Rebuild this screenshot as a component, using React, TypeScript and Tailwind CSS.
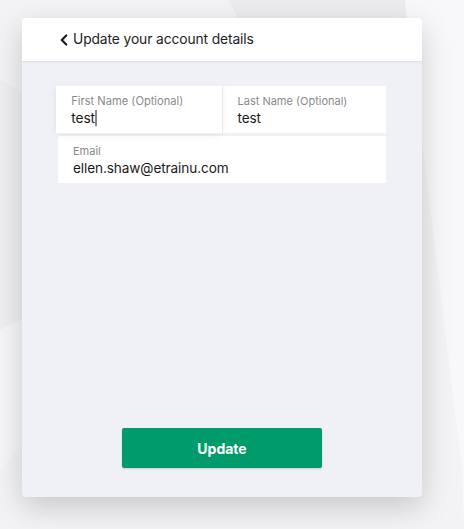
import { ChevronLeft } from "lucide-react";

function Field({
  label,
  value,
  focused,
}: {
  label: string;
  value: string;
  focused?: boolean;
}) {
  return (
    <div
      className={`flex h-[47px] flex-col bg-white px-[15px] pt-[8px] ${
        focused
          ? "relative z-10 origin-right scale-[1.012] shadow-[0_2px_8px_rgba(0,0,0,0.08)]"
          : ""
      }`}
    >
      <span className="text-[11px] leading-[14px] text-[#8a8a8e]">{label}</span>
      <span className="flex items-center text-[13.6px] leading-[20px] tracking-[-0.1px] text-[#1a1a1a]">
        {value}
        {focused && <span className="ml-px h-[16px] w-px bg-[#1a1a1a]" />}
      </span>
    </div>
  );
}

export default function App() {
  return (
    <div className="relative h-[529px] w-[464px] overflow-hidden bg-[#f3f3f5] font-['Inter',sans-serif]">
      <svg
        className="absolute inset-0"
        width="464"
        height="529"
        viewBox="0 0 464 529"
      >
        <polygon points="228,0 405,0 420,160 250,40" fill="#ececee" />
        <polygon points="405,0 464,0 464,529 462,470" fill="#f8f8fa" />
        <polygon points="0,80 60,110 60,300 0,330" fill="#efeff1" />
        <polygon points="0,330 60,300 60,400 0,470" fill="#f6f6f8" />
      </svg>

      <div className="relative px-[22px] pt-[18px]">
        <div className="flex h-[479px] w-[400px] flex-col overflow-hidden rounded-[4px] bg-[#f0f1f6] shadow-[0_10px_30px_rgba(0,0,0,0.18)]">
          <div className="flex h-[44px] items-center border-b border-[#e2e3e8] bg-white pl-[33px] shadow-[0_1px_2px_rgba(0,0,0,0.04)]">
            <ChevronLeft size={18} strokeWidth={3} className="text-[#1f1f1f]" />
            <span className="ml-[0px] text-[13.8px] tracking-[-0.1px] text-[#222]">
              Update your account details
            </span>
          </div>

          <div className="flex flex-1 flex-col px-[36px] pt-[24px] pb-[29px]">
            <div className="grid grid-cols-2 gap-x-px gap-y-[3px]">
              <Field label="First Name (Optional)" value="test" focused />
              <Field label="Last Name (Optional)" value="test" />
              <div className="col-span-2">
                <Field label="Email" value="ellen.shaw@etrainu.com" />
              </div>
            </div>

            <div className="mt-auto flex justify-center">
              <button
                type="button"
                className="h-[40px] w-[200px] rounded-[2px] bg-[#009b6b] text-[14px] font-bold text-white shadow-[0_1px_2px_rgba(0,0,0,0.15)]"
              >
                Update
              </button>
            </div>
          </div>
        </div>
      </div>
    </div>
  );
}
